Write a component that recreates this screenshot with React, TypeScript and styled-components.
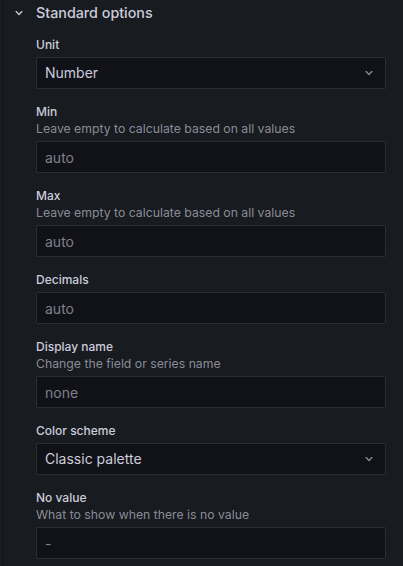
import styled, { createGlobalStyle } from "styled-components";

const GlobalStyle = createGlobalStyle`
    html, body {
        margin: 0;
        padding: 0;
        background: #181b1f;
    }
    body {
        font-family: Inter, "Noto Sans", sans-serif;
        color: #ccccdc;
        -webkit-font-smoothing: antialiased;
    }
`

type FieldDef = {
    label: string
    description?: string
    value?: string
    placeholder?: string
    select?: boolean
}

const fields: FieldDef[] = [
    { label: "Unit", value: "Number", select: true },
    { label: "Min", description: "Leave empty to calculate based on all values", placeholder: "auto" },
    { label: "Max", description: "Leave empty to calculate based on all values", placeholder: "auto" },
    { label: "Decimals", placeholder: "auto" },
    { label: "Display name", description: "Change the field or series name", placeholder: "none" },
    { label: "Color scheme", value: "Classic palette", select: true },
    { label: "No value", description: "What to show when there is no value", placeholder: "-" },
]

const AngleDown = ({ size = 16 }: { size?: number }) => (
    <svg width={size} height={size} viewBox="0 0 24 24" fill="currentColor">
        <path d="M17,9.17a1,1,0,0,0-1.41,0L12,12.71,8.46,9.17a1,1,0,0,0-1.41,0,1,1,0,0,0,0,1.42l4.24,4.24a1,1,0,0,0,1.42,0L17,10.59A1,1,0,0,0,17,9.17Z" />
    </svg>
)

export default function App() {
    return (
        <>
            <GlobalStyle />
            <Pane>
                <Header>
                    <HeaderIcon><AngleDown /></HeaderIcon>
                    <HeaderTitle>Standard options</HeaderTitle>
                </Header>
                <Body>
                    {fields.map((f) => (
                        <Field key={f.label}>
                            <LabelBlock>
                                <Label>{f.label}</Label>
                                {f.description && <Description>{f.description}</Description>}
                            </LabelBlock>
                            {f.select ? (
                                <SelectBox>
                                    <SelectValue>{f.value}</SelectValue>
                                    <SelectIcon><AngleDown /></SelectIcon>
                                </SelectBox>
                            ) : (
                                <Input placeholder={f.placeholder} readOnly />
                            )}
                        </Field>
                    ))}
                </Body>
            </Pane>
        </>
    )
}

const Pane = styled.div`
    margin-left: 3px;
    border-left: 1px solid #111217;
    min-height: 566px;
    box-sizing: border-box;
    background: #181b1f;
`

const Header = styled.div`
    height: 26px;
    display: flex;
    align-items: center;
    padding-left: 7px;
`

const HeaderIcon = styled.span`
    width: 16px;
    height: 16px;
    display: flex;
    margin-right: 9px;
    margin-top: -1px;
    color: #ccccdc;
`

const HeaderTitle = styled.span`
    font-size: 14.3px;
    line-height: 22px;
    font-weight: 500;
    color: #ccccdc;
`

const Body = styled.div`
    padding: 11px 17px 0 32px;
`

const Field = styled.div`
    margin-bottom: 15px;
`

const LabelBlock = styled.div`
    display: flex;
    flex-direction: column;
    padding-bottom: 4px;
`

const Label = styled.div`
    font-size: 12px;
    line-height: 16px;
    font-weight: 500;
    color: #ccccdc;
`

const Description = styled.div`
    font-size: 12.25px;
    line-height: 17px;
    color: rgba(204, 204, 220, 0.65);
`

const Input = styled.input`
    display: block;
    box-sizing: border-box;
    width: 100%;
    height: 32px;
    padding: 0 8px;
    background: #111217;
    border: 1px solid rgba(204, 204, 220, 0.15);
    border-radius: 2px;
    font-family: Inter, "Noto Sans", sans-serif;
    font-size: 14px;
    color: #ccccdc;
    outline: none;
    &::placeholder {
        color: rgba(204, 204, 220, 0.6);
    }
`

const SelectBox = styled.div`
    box-sizing: border-box;
    height: 32px;
    display: flex;
    align-items: center;
    padding: 0 8px;
    background: #111217;
    border: 1px solid rgba(204, 204, 220, 0.15);
    border-radius: 2px;
`

const SelectValue = styled.span`
    flex: 1;
    font-size: 14px;
    line-height: 22px;
    color: #ccccdc;
`

const SelectIcon = styled.span`
    width: 16px;
    height: 16px;
    display: flex;
    color: rgba(204, 204, 220, 0.65);
`
